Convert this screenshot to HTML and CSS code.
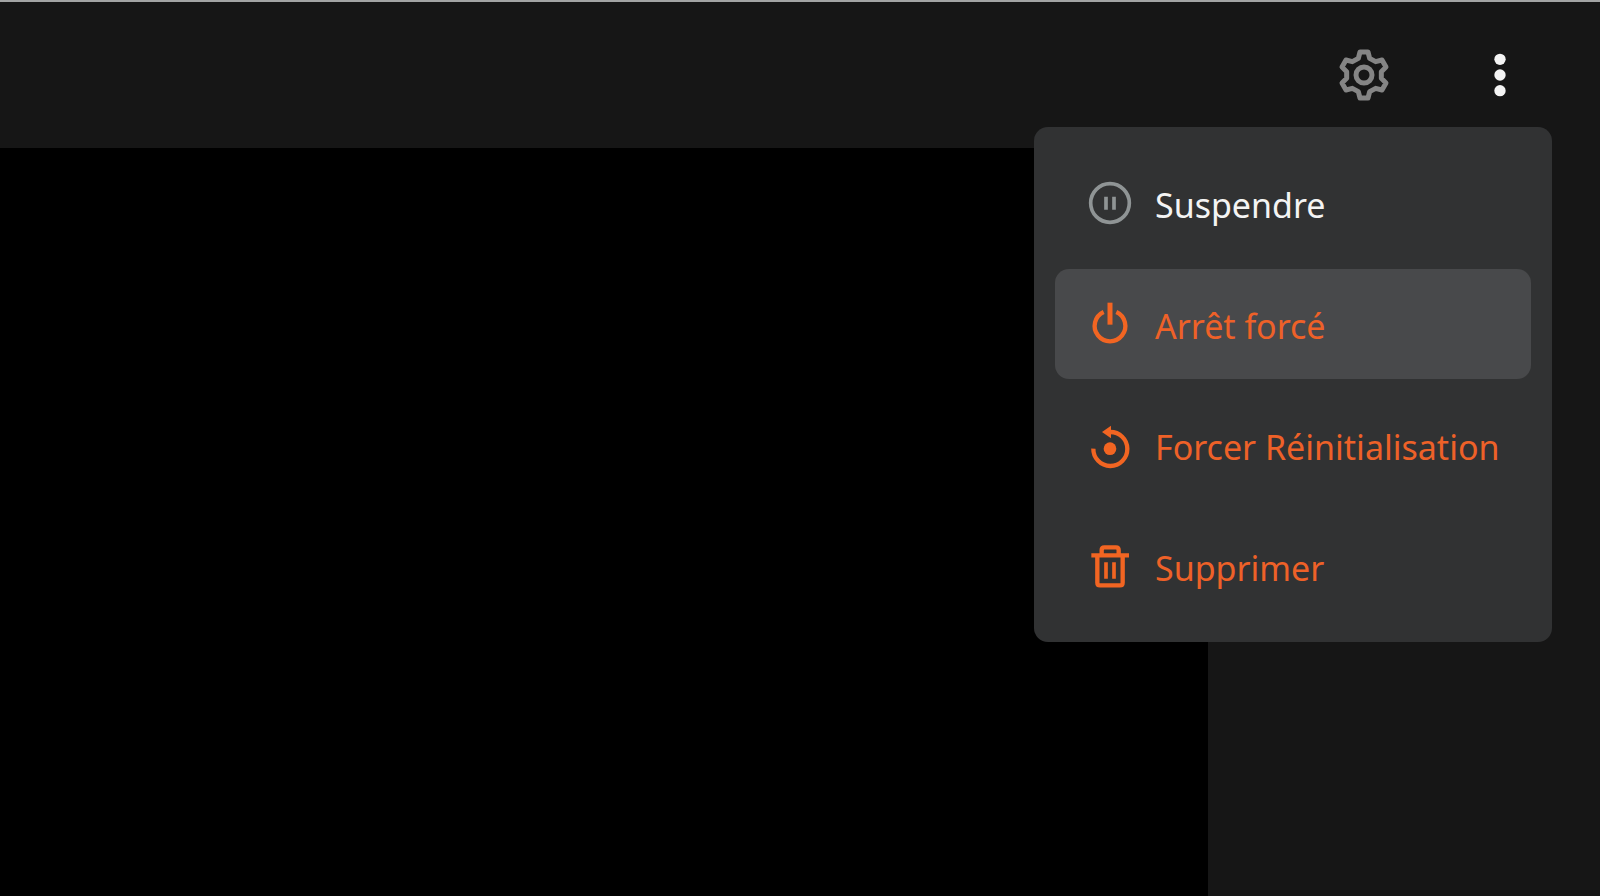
FILE: index.html
```html
<!DOCTYPE html>
<html lang="fr">
<head>
    <meta charset="UTF-8">
    <meta name="viewport" content="width=device-width, initial-scale=1.0">
    <title>Console</title>
    <link rel="stylesheet" href="styles.css">
</head>
<body>
    <header class="toolbar">
        <button type="button" class="icon-btn settings-btn" aria-label="Paramètres">
            <svg viewBox="-90 -90 180 180" aria-hidden="true">
                <path d="M-17 -50L-12 -69H12L17 -50L35 -40L54 -45L66 -24L52 -10V10L66 24L54 45L35 40L17 50L12 69H-12L-17 50L-35 40L-54 45L-66 24L-52 10V-10L-66 -24L-54 -45L-35 -40Z"/>
                <circle r="24"/>
            </svg>
        </button>
        <button type="button" class="icon-btn more-btn" aria-label="Plus d'options" aria-haspopup="menu" aria-expanded="true">
            <svg viewBox="-90 -90 180 180" aria-hidden="true">
                <circle cy="-47" r="17"/>
                <circle r="17"/>
                <circle cy="47" r="17"/>
            </svg>
        </button>

        <div class="menu" role="menu">
            <button type="button" class="menu-item" role="menuitem">
                <svg class="menu-icon" viewBox="-72 -72 144 144" aria-hidden="true">
                    <circle r="58" stroke-width="11"/>
                    <path d="M-12 -19V20M12 -19V20" stroke-width="11"/>
                </svg>
                <span class="menu-label">Suspendre</span>
            </button>
            <button type="button" class="menu-item danger active" role="menuitem">
                <svg class="menu-icon" viewBox="-72 -72 144 144" aria-hidden="true">
                    <path d="M-19 -36A46 46 0 1 0 19 -36" stroke-width="13"/>
                    <path d="M0 -64V2" stroke-width="15"/>
                </svg>
                <span class="menu-label">Arrêt forcé</span>
            </button>
            <button type="button" class="menu-item danger" role="menuitem">
                <svg class="menu-icon" viewBox="-72 -72 144 144" aria-hidden="true">
                    <path d="M-50 11A51 51 0 1 0 0 -39" stroke-width="13"/>
                    <path class="solid" d="M-24 -39L3 -58V-20Z"/>
                    <circle class="solid" cy="11" r="19"/>
                </svg>
                <span class="menu-label">Forcer Réinitialisation</span>
            </button>
            <button type="button" class="menu-item danger" role="menuitem">
                <svg class="menu-icon" viewBox="-72 -72 144 144" aria-hidden="true">
                    <path d="M-56 -32H57M-25 -34V-48Q-25 -56 -17 -56H18Q26 -56 26 -48V-34M-38 -32V50Q-38 58 -30 58H30Q38 58 38 50V-32" stroke-width="13"/>
                    <path d="M-12 -11V38M12 -11V38" stroke-width="11"/>
                </svg>
                <span class="menu-label">Supprimer</span>
            </button>
        </div>
    </header>

    <main class="content">
        <section class="console" aria-label="Console"></section>
        <aside class="side"></aside>
    </main>
</body>
</html>
```
FILE: styles.css
```css
* {
    box-sizing: border-box;
}

body {
    display: flex;
    flex-direction: column;
    margin: 0;
    min-height: 100vh;
    background: #161616;
    color: #f4f4f4;
    font-family: "Noto Sans", "Open Sans", sans-serif;
}

button {
    border: none;
    background: none;
    color: inherit;
    font: inherit;
    cursor: pointer;
}

.toolbar {
    position: relative;
    display: flex;
    justify-content: flex-end;
    gap: 76px;
    padding: 43px 70px;
    border-top: 2px solid #a2a4a4;
}

.icon-btn {
    width: 60px;
    height: 60px;
    padding: 0;
}

.icon-btn svg {
    display: block;
    width: 100%;
    height: 100%;
}

.settings-btn svg {
    fill: none;
    stroke: #858585;
    stroke-width: 15;
    stroke-linejoin: round;
}

.more-btn svg {
    fill: #f4f4f4;
}

/* dropdown */
.menu {
    position: absolute;
    top: 125px;
    right: 48px;
    z-index: 10;
    display: flex;
    flex-direction: column;
    gap: 11px;
    padding: 21px;
    border-radius: 14px;
    background: #313233;
}

.menu-item {
    display: flex;
    align-items: center;
    gap: 21px;
    min-width: 476px;
    padding: 29px 31px;
    border-radius: 14px;
    font-size: 34px;
    line-height: 48px;
    text-align: left;
    white-space: nowrap;
}

.menu-item.active,
.menu-item:hover {
    background: #48494b;
}

.menu-item.danger {
    color: #ee6128;
}

.menu-icon {
    flex: none;
    width: 48px;
    height: 48px;
    fill: none;
    stroke: #8f9495;
}

.danger .menu-icon {
    stroke: #f26522;
}

.menu-icon .solid {
    fill: #f26522;
    stroke: none;
}

.menu-label {
    padding-top: 4px;
}

.content {
    flex: 1;
    display: flex;
}

.console {
    flex: 1;
    background: #000;
}

.side {
    width: 392px;
}
```
